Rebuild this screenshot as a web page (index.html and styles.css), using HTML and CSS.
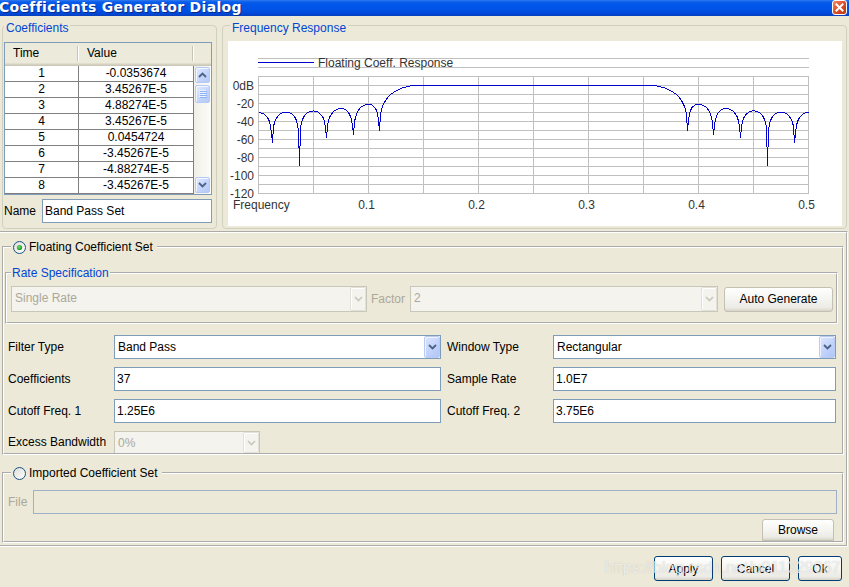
FILE: index.html
```html
<!DOCTYPE html>
<html>
<head>
<meta charset="utf-8">
<title>Coefficients Generator Dialog</title>
<link rel="stylesheet" href="styles.css">
</head>
<body>
<div class="window">
  <div class="titlebar">
    <span class="title">Coefficients Generator Dialog</span>
    <span class="close">
      <svg width="15" height="15" viewBox="0 0 15 15">
        <defs>
          <linearGradient id="closeg" x1="0" y1="0" x2="1" y2="1">
            <stop offset="0" stop-color="#F0906E"/>
            <stop offset="0.45" stop-color="#E2532C"/>
            <stop offset="1" stop-color="#B8300E"/>
          </linearGradient>
        </defs>
        <rect x="0.5" y="0.5" width="14" height="14" rx="2.5" fill="url(#closeg)" stroke="#FFFFFF"/>
        <path d="M4.5 4.5 L10.5 10.5 M10.5 4.5 L4.5 10.5" stroke="#FFFFFF" stroke-width="2" stroke-linecap="square"/>
      </svg>
    </span>
  </div>

  <div class="top">
    <fieldset class="xpgroup coeffs">
      <legend>Coefficients</legend>
      <div class="table">
        <div class="thead">
          <div class="th th-time">Time</div>
          <div class="th th-value">Value</div>
          <div class="th th-fill"></div>
        </div>
        <div class="tbody">
          <div class="rows">
            <div class="row"><div class="cell c-time">1</div><div class="cell c-value">-0.0353674</div></div>
            <div class="row"><div class="cell c-time">2</div><div class="cell c-value">3.45267E-5</div></div>
            <div class="row"><div class="cell c-time">3</div><div class="cell c-value">4.88274E-5</div></div>
            <div class="row"><div class="cell c-time">4</div><div class="cell c-value">3.45267E-5</div></div>
            <div class="row"><div class="cell c-time">5</div><div class="cell c-value">0.0454724</div></div>
            <div class="row"><div class="cell c-time">6</div><div class="cell c-value">-3.45267E-5</div></div>
            <div class="row"><div class="cell c-time">7</div><div class="cell c-value">-4.88274E-5</div></div>
            <div class="row"><div class="cell c-time">8</div><div class="cell c-value">-3.45267E-5</div></div>
          </div>
          <div class="vscroll">
            <div class="sbtn">
              <svg width="9" height="6" viewBox="0 0 9 6"><path d="M1 5 L4.5 1.5 L8 5" fill="none" stroke="#4D6185" stroke-width="1.8"/></svg>
            </div>
            <div class="thumb">
              <svg width="8" height="8" viewBox="0 0 8 8"><path d="M0 0.5H7M0 2.5H7M0 4.5H7M0 6.5H7" stroke="#EEF4FE" stroke-width="1"/><path d="M1 1.5H8M1 3.5H8M1 5.5H8M1 7.5H8" stroke="#8CB0F8" stroke-width="1"/></svg>
            </div>
            <div class="track"></div>
            <div class="sbtn">
              <svg width="9" height="6" viewBox="0 0 9 6"><path d="M1 1 L4.5 4.5 L8 1" fill="none" stroke="#4D6185" stroke-width="1.8"/></svg>
            </div>
          </div>
        </div>
      </div>
      <div class="namerow">
        <span class="namelabel">Name</span>
        <div class="field namefield">Band Pass Set</div>
      </div>
    </fieldset>

    <fieldset class="xpgroup freq">
      <legend>Frequency Response</legend>
      <div class="chart">
        <svg class="plot" width="614" height="185" viewBox="0 0 614 185">
          <path class="grid" d="M30 17.5H581M30 26.5H581
            M30 35.5H581M30 44.5H581M30 53.5H581M30 62.5H581M30 71.5H581M30 80.5H581M30 89.5H581
            M30 98.5H581M30 107.5H581M30 116.5H581M30 125.5H581M30 134.5H581M30 143.5H581M30 152.5H581
            M30.5 35V153M85.5 35V153M140.5 35V153M195.5 35V153M250.5 35V153M305.5 35V153
            M360.5 35V153M415.5 35V153M470.5 35V153M525.5 35V153M580.5 35V153"/>
          <path class="legline" d="M30 21.5H86"/>
          <text class="lbl" x="90" y="25.5">Floating Coeff. Response</text>
          <text class="lbl" x="26" y="49" text-anchor="end">0dB</text>
          <text class="lbl" x="26" y="67" text-anchor="end">-20</text>
          <text class="lbl" x="26" y="85" text-anchor="end">-40</text>
          <text class="lbl" x="26" y="103" text-anchor="end">-60</text>
          <text class="lbl" x="26" y="121" text-anchor="end">-80</text>
          <text class="lbl" x="26" y="139" text-anchor="end">-100</text>
          <text class="lbl" x="26" y="157" text-anchor="end">-120</text>
          <text class="lbl" x="5" y="168">Frequency</text>
          <text class="lbl" x="138.5" y="168" text-anchor="middle">0.1</text>
          <text class="lbl" x="248.5" y="168" text-anchor="middle">0.2</text>
          <text class="lbl" x="358.5" y="168" text-anchor="middle">0.3</text>
          <text class="lbl" x="468.5" y="168" text-anchor="middle">0.4</text>
          <text class="lbl" x="578.5" y="168" text-anchor="middle">0.5</text>
          <path id="curve" class="curve" d=""/>
        </svg>
      </div>
    </fieldset>
  </div>

  <div class="panel">
    <fieldset class="etched floating">
      <legend class="radiolegend">
        <svg width="13" height="13" viewBox="0 0 13 13">
          <defs>
            <linearGradient id="rg1" x1="0" y1="0" x2="1" y2="1">
              <stop offset="0" stop-color="#DCDCD7"/>
              <stop offset="1" stop-color="#FFFFFF"/>
            </linearGradient>
            <radialGradient id="dot1" cx="0.4" cy="0.4" r="0.6">
              <stop offset="0" stop-color="#6EE06E"/>
              <stop offset="1" stop-color="#179A17"/>
            </radialGradient>
          </defs>
          <circle cx="6.5" cy="6.5" r="6" fill="url(#rg1)" stroke="#1C5180"/>
          <circle cx="6.5" cy="6.5" r="2.6" fill="url(#dot1)"/>
        </svg>
        <span>Floating Coefficient Set</span>
      </legend>

      <fieldset class="etched rate">
        <legend class="bluelegend">Rate Specification</legend>
        <div class="raterow">
          <div class="combo disabled single"><span class="ctext">Single Rate</span>
            <span class="cbtn"><svg width="9" height="6" viewBox="0 0 9 6"><path d="M1 1 L4.5 4.5 L8 1" fill="none" stroke="#C9C7BA" stroke-width="1.6"/></svg></span>
          </div>
          <span class="factorlabel">Factor</span>
          <div class="combo disabled factor"><span class="ctext">2</span>
            <span class="cbtn"><svg width="9" height="6" viewBox="0 0 9 6"><path d="M1 1 L4.5 4.5 L8 1" fill="none" stroke="#C9C7BA" stroke-width="1.6"/></svg></span>
          </div>
          <div class="btn gray autogen">Auto Generate</div>
        </div>
      </fieldset>

      <div class="form">
        <span class="flabel">Filter Type</span>
        <div class="combo"><span class="ctext">Band Pass</span>
          <span class="cbtn"><svg width="9" height="6" viewBox="0 0 9 6"><path d="M1 1 L4.5 4.5 L8 1" fill="none" stroke="#4D6185" stroke-width="1.8"/></svg></span>
        </div>
        <span></span>
        <span class="flabel">Window Type</span>
        <div class="combo"><span class="ctext">Rectangular</span>
          <span class="cbtn"><svg width="9" height="6" viewBox="0 0 9 6"><path d="M1 1 L4.5 4.5 L8 1" fill="none" stroke="#4D6185" stroke-width="1.8"/></svg></span>
        </div>

        <span class="flabel">Coefficients</span>
        <div class="field">37</div>
        <span></span>
        <span class="flabel">Sample Rate</span>
        <div class="field">1.0E7</div>

        <span class="flabel">Cutoff Freq. 1</span>
        <div class="field">1.25E6</div>
        <span></span>
        <span class="flabel">Cutoff Freq. 2</span>
        <div class="field">3.75E6</div>

        <span class="flabel">Excess Bandwidth</span>
        <div class="combo disabled excess"><span class="ctext">0%</span>
          <span class="cbtn"><svg width="9" height="6" viewBox="0 0 9 6"><path d="M1 1 L4.5 4.5 L8 1" fill="none" stroke="#C9C7BA" stroke-width="1.6"/></svg></span>
        </div>
      </div>
    </fieldset>

    <fieldset class="etched imported">
      <legend class="radiolegend">
        <svg width="13" height="13" viewBox="0 0 13 13">
          <defs>
            <linearGradient id="rg2" x1="0" y1="0" x2="1" y2="1">
              <stop offset="0" stop-color="#DCDCD7"/>
              <stop offset="1" stop-color="#FFFFFF"/>
            </linearGradient>
          </defs>
          <circle cx="6.5" cy="6.5" r="6" fill="url(#rg2)" stroke="#1C5180"/>
        </svg>
        <span>Imported Coefficient Set</span>
      </legend>
      <div class="filerow">
        <span class="filelabel">File</span>
        <div class="field filefield"></div>
      </div>
      <div class="browserow">
        <div class="btn gray browse">Browse</div>
      </div>
    </fieldset>
  </div>

  <div class="actions">
    <div class="btn xp apply">Apply</div>
    <div class="btn xp cancel">Cancel</div>
    <div class="btn xp ok">Ok</div>
  </div>

  <div class="watermark">https://blog.csdn.net/u011329067</div>
</div>
<script src="script.js"></script>
</body>
</html>
```

FILE: styles.css
```css
* { box-sizing: border-box; }
html, body { margin: 0; padding: 0; }
body {
  font-family: "Liberation Sans", Arial, sans-serif;
  font-size: 12px;
  color: #000;
  background: #ECE9D8;
}
.window {
  width: 849px;
  height: 587px;
  background: #ECE9D8;
  position: relative;
  overflow: hidden;
}

/* title bar */
.titlebar {
  height: 16px;
  display: flex;
  justify-content: space-between;
  align-items: flex-start;
  background: linear-gradient(to bottom, #2F7BF2 0, #0A5CE8 2px, #0056EA 5px, #0052E4 10px, #0047D6 14px, #0A3FB8 16px);
}
.title {
  font-family: "DejaVu Sans", sans-serif;
  font-weight: bold;
  font-size: 14px;
  letter-spacing: 0.3px;
  line-height: 15px;
  color: #FFFFFF;
  text-shadow: 1px 1px 0 #0A2A8C;
  white-space: nowrap;
  margin-left: -1px;
}
.close { display: flex; margin-right: 2px; }

/* top row */
.top { display: flex; height: 213px; }
.xpgroup {
  margin: 0;
  min-width: 0;
  height: 213px;
  border: 1px solid #D0D0BF;
  border-radius: 4px;
}
.xpgroup > legend {
  padding: 5px 2px 0 2px;
  line-height: 14px;
  font-size: 12px;
  color: #0046D5;
}
.coeffs { width: 215px; margin-left: 2px; padding: 7px 4px 5px 1px; }
.freq { width: 625px; margin-left: 5px; padding: 6px 4px 2px 5px; }
.freq > legend { margin-left: 2px; }

/* table */
.table { width: 208px; border: 1px solid #7F9DB9; background: #FFFFFF; }
.thead {
  display: flex;
  height: 23px;
  background: linear-gradient(to bottom, #EBEADB 0, #EBEADB 20px, #E2DECD 20px, #E2DECD 21px, #D6D2C2 21px, #D6D2C2 22px, #CBC7B8 22px);
}
.th {
  line-height: 21px;
  padding-left: 8px;
  background-repeat: no-repeat;
}
.th-time, .th-value {
  background-image: linear-gradient(#C7C5B2, #C7C5B2), linear-gradient(#FFFFFF, #FFFFFF);
  background-size: 1px 15px, 1px 15px;
  background-position: right 1px top 3px, right 0 top 3px;
}
.th-time { width: 74px; }
.th-value { width: 115px; }
.th-fill { flex: 1; }
.tbody { display: flex; height: 128px; }
.rows { width: 189px; }
.row { display: flex; height: 16px; border-bottom: 1px solid #808080; }
.cell { line-height: 15px; text-align: center; }
.c-time { width: 74px; border-right: 1px solid #808080; }
.c-value { width: 115px; border-right: 1px solid #808080; }

.vscroll {
  width: 17px;
  display: flex;
  flex-direction: column;
  background: linear-gradient(to right, #F1EFE6, #FCFCF9);
  padding: 1px;
}
.sbtn, .thumb {
  height: 16px;
  border: 1px solid #B5C9F5;
  border-radius: 2px;
  background: linear-gradient(135deg, #E3EBFE 0, #C6D6FC 50%, #B4C9F8 100%);
  box-shadow: inset 1px 1px 0 #F2F6FF;
  display: flex;
  align-items: center;
  justify-content: center;
}
.thumb { height: 18px; margin-top: 2px; }
.track { flex: 1; }

.namerow { display: flex; align-items: center; margin-top: 4px; }
.namelabel { width: 38px; }
.field {
  height: 24px;
  border: 1px solid #7F9DB9;
  background: #FFFFFF;
  padding-left: 2px;
  line-height: 22px;
  white-space: nowrap;
}
.namefield { width: 170px; }

/* chart */
.chart { width: 614px; height: 185px; background: #FFFFFF; }
.plot { display: block; }
.grid { stroke: #C0C0C0; stroke-width: 1; fill: none; }
.legline { stroke: #0000CD; stroke-width: 1; }
.curve { stroke: #0000CD; stroke-width: 1; fill: none; shape-rendering: crispEdges; }
.lbl { font-family: "Liberation Sans", Arial, sans-serif; font-size: 12px; fill: #333333; }

/* lower panel */
.panel {
  width: 848px;
  margin-top: 2px;
  border-top: 2px groove #FFFFFF;
  border-right: 2px groove #FFFFFF;
  border-bottom: 2px groove #FFFFFF;
  padding: 6px 0 2px 2px;
}
.etched { margin: 0; min-width: 0; border: 2px groove #FFFFFF; }
.floating { width: 842px; padding: 11px 4px 0 1px; }
.imported { width: 842px; margin-top: 10px; padding: 9px 5px 0 1px; }
.radiolegend {
  display: flex;
  align-items: center;
  gap: 3px;
  height: 16px;
  line-height: 16px;
  margin-left: 6px;
  padding: 0 4px 0 2px;
}
.radiolegend svg { display: block; }
.rate { padding: 6px 3px 10px 4px; }
.bluelegend { color: #0046D5; line-height: 14px; padding: 0 1px; }
.raterow { display: flex; align-items: center; height: 26px; }

.combo {
  height: 24px;
  border: 1px solid #7F9DB9;
  background: #FFFFFF;
  display: flex;
  align-items: stretch;
}
.ctext { flex: 1; padding-left: 3px; line-height: 22px; white-space: nowrap; }
.cbtn {
  width: 16px;
  border: 1px solid #B9CBF3;
  border-radius: 2px;
  background: linear-gradient(135deg, #DCE6FD 0, #C4D4FC 50%, #B0C6F6 100%);
  box-shadow: inset 1px 1px 0 #EEF3FF;
  display: flex;
  align-items: center;
  justify-content: center;
}
.combo.disabled { background: #F4F3EE; border-color: #C9C7BA; }
.combo.disabled .ctext { color: #ACA899; }
.combo.disabled .cbtn {
  background: #F4F3EE;
  border-color: #E3E1D7;
  box-shadow: inset 1px 1px 0 #FFFFFF;
}
.single { width: 356px; height: 26px; }
.factor { width: 308px; height: 26px; }
.factorlabel { width: 39px; margin-left: 4px; color: #ACA899; }

.btn {
  height: 25px;
  border-radius: 3px;
  background: linear-gradient(to bottom, #FFFFFF 0, #F4F4F0 50%, #ECEBE6 85%, #D8D3C8 100%);
  display: flex;
  align-items: center;
  justify-content: center;
  white-space: nowrap;
}
.btn.gray { border: 1px solid #C3C1B4; }
.btn.xp { border: 1px solid #003C74; }
.autogen { width: 109px; margin-left: 6px; }

.form {
  display: grid;
  grid-template-columns: 106px 327px 6px 106px 283px;
  grid-template-rows: 24px 24px 24px 22px;
  row-gap: 8px;
  margin: 11px 0 0 3px;
  align-items: center;
}
.flabel { white-space: nowrap; }
.excess { width: 146px; height: 22px; border-bottom: none; }

.filerow { display: flex; align-items: center; }
.filelabel { width: 25px; margin-left: 3px; color: #ACA899; }
.filefield { width: 804px; background: #ECE9D8; border-color: #9DB0C8; }
.browserow { display: flex; justify-content: flex-end; margin-top: 5px; padding-right: 3px; }
.browse { width: 72px; height: 22px; border-bottom-left-radius: 0; border-bottom-right-radius: 0; }

.actions {
  display: flex;
  justify-content: flex-end;
  gap: 8px;
  margin-top: 9px;
  padding-right: 7px;
}
.apply { width: 59px; margin-left: 1px; }
.cancel { width: 69px; }
.ok { width: 44px; }

.watermark {
  position: absolute;
  left: 605px;
  top: 559px;
  font-size: 16px;
  line-height: 18px;
  color: rgba(255, 255, 255, 0.72);
  text-shadow: 0 0 1px rgba(90, 90, 90, 0.35);
  white-space: nowrap;
  pointer-events: none;
}
```

FILE: script.js
```js
(function () {
  var N = 37, M = 18;
  var fc1 = 0.125 - 2.44137e-5, fc2 = 0.375;
  var h = [];
  for (var n = 0; n < N; n++) {
    var m = n - M;
    h.push(m === 0 ? 2 * (fc2 - fc1)
      : (Math.sin(2 * Math.PI * fc2 * m) - Math.sin(2 * Math.PI * fc1 * m)) / (Math.PI * m));
  }
  var db = [];
  for (var i = 0; i <= 550; i++) {
    var f = i / 1100, re = 0, im = 0;
    for (var k = 0; k < N; k++) {
      var a = 2 * Math.PI * f * k;
      re += h[k] * Math.cos(a);
      im -= h[k] * Math.sin(a);
    }
    var mag = Math.sqrt(re * re + im * im);
    var v = 20 * Math.log10(Math.max(mag, 1e-12));
    if (v > 0) v = 0;
    db.push(v);
  }
  /* depth of the sampled nulls as the plot shows them */
  var nulls = [[271, -63.5], [298, -89], [326, -58], [353, -54.5], [379, -50],
               [687, -50], [713, -54.5], [740, -58], [767, -89], [794, -63.5]];
  nulls.forEach(function (p) {
    var c = p[0] - 258, best = c;
    for (var j = c - 3; j <= c + 3; j++) {
      if (j >= 0 && j <= 550 && db[j] < db[best]) best = j;
    }
    db[best] = p[1];
  });
  var d = '';
  for (var q = 0; q <= 550; q++) {
    var val = Math.max(db[q], -120);
    var y = Math.round(44 - val * 0.9) + 0.5;
    d += (q ? 'L' : 'M') + (30.5 + q) + ' ' + y;
  }
  document.getElementById('curve').setAttribute('d', d);
})();
```
